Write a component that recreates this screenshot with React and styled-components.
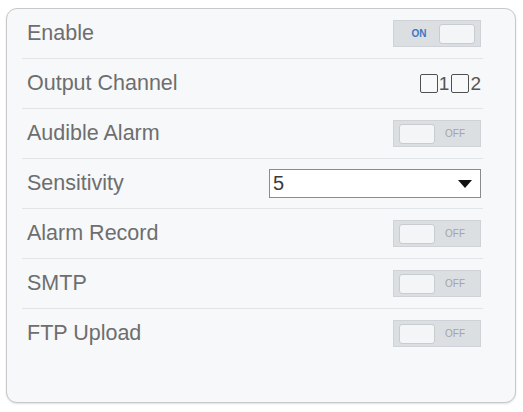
import React from 'react';
import styled, { createGlobalStyle } from 'styled-components';

const GlobalStyle = createGlobalStyle`
  body {
    margin: 0;
    background: #ffffff;
    font-family: "Liberation Sans", Arial, sans-serif;
  }
`;

const Page = styled.div`
  width: 523px;
  height: 412px;
  padding: 8px 7px 9px 6px;
  box-sizing: border-box;
`;

const Panel = styled.section`
  height: 100%;
  box-sizing: border-box;
  border: 1.5px solid #c6c8cb;
  border-radius: 11px;
  background: #f6f8fa;
  box-shadow: 0 1px 2px rgba(0, 0, 0, 0.12);
  padding: 0 32px 0 15px;
`;

const Row = styled.div`
  display: flex;
  align-items: center;
  justify-content: space-between;
  height: 49px;
  padding: 0 2px 0 5px;
  border-bottom: 1px solid ${({ last }) => (last ? 'transparent' : '#e2e5e8')};
`;

const Label = styled.span`
  font-size: 21.5px;
  color: #6e6e6e;
`;

const Toggle = styled.button`
  display: flex;
  align-items: center;
  flex-direction: ${({ on }) => (on ? 'row' : 'row-reverse')};
  justify-content: space-between;
  width: 88px;
  height: 27px;
  padding: 0 5px;
  box-sizing: border-box;
  border: 1px solid #cfd2d6;
  background: #dcdfe2;
  cursor: pointer;
`;

const ToggleText = styled.span`
  flex: 1;
  text-align: center;
  font-family: "Liberation Sans", Arial, sans-serif;
  font-size: 10px;
  font-weight: ${({ on }) => (on ? 700 : 400)};
  color: ${({ on }) => (on ? '#3a78c2' : '#a2a4a6')};
`;

const Knob = styled.span`
  width: 36px;
  height: 20px;
  box-sizing: border-box;
  border: 1px solid #c8cbcf;
  border-radius: 3px;
  background: #f3f5f7;
`;

const Channels = styled.div`
  display: flex;
  align-items: center;
  gap: 2px;
  font-size: 19px;
  color: #555;
`;

const Channel = styled.label`
  display: flex;
  align-items: center;
  gap: 1px;
`;

const Box = styled.span`
  width: 18px;
  height: 19px;
  box-sizing: border-box;
  border: 1.5px solid #505050;
  border-radius: 2px;
  background: #f8f9fa;
`;

const Select = styled.div`
  display: flex;
  align-items: center;
  justify-content: space-between;
  width: 212px;
  height: 29px;
  box-sizing: border-box;
  padding: 0 8px 0 3px;
  border: 1.5px solid #8a8b8d;
  background: #ffffff;
  font-size: 20px;
  color: #3a3a3a;
`;

const Arrow = styled.span`
  width: 0;
  height: 0;
  border-left: 7px solid transparent;
  border-right: 7px solid transparent;
  border-top: 8px solid #111;
`;

const Switch = ({ on }) => (
  <Toggle on={on ? 1 : 0}>
    <ToggleText on={on ? 1 : 0}>{on ? 'ON' : 'OFF'}</ToggleText>
    <Knob />
  </Toggle>
);

const rows = [
  { label: 'Enable', control: <Switch on /> },
  {
    label: 'Output Channel',
    control: (
      <Channels>
        <Channel>
          <Box />1
        </Channel>
        <Channel>
          <Box />2
        </Channel>
      </Channels>
    ),
  },
  { label: 'Audible Alarm', control: <Switch /> },
  {
    label: 'Sensitivity',
    control: (
      <Select>
        5
        <Arrow />
      </Select>
    ),
  },
  { label: 'Alarm Record', control: <Switch /> },
  { label: 'SMTP', control: <Switch /> },
  { label: 'FTP Upload', control: <Switch /> },
];

const App = () => (
  <>
    <GlobalStyle />
    <Page>
      <Panel>
        {rows.map((row, i) => (
          <Row key={row.label} last={i === rows.length - 1 ? 1 : 0}>
            <Label>{row.label}</Label>
            {row.control}
          </Row>
        ))}
      </Panel>
    </Page>
  </>
);

export default App;
